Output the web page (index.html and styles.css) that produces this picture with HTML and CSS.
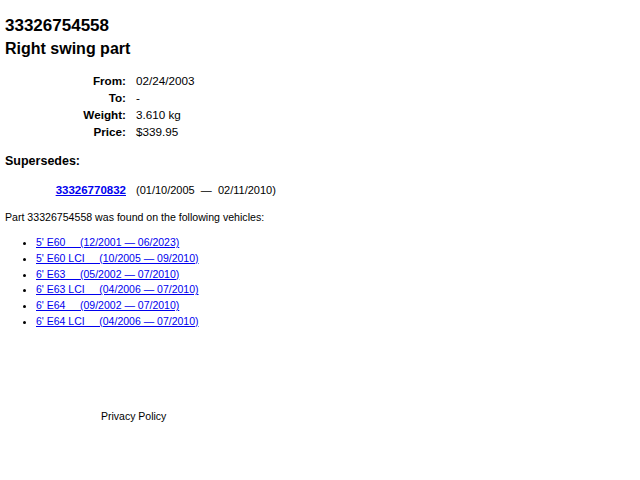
FILE: index.html
```html
<!DOCTYPE html>
<html lang="en">
<head>
  <meta charset="UTF-8">
  <title>33326754558 Right swing part</title>
  <link rel="stylesheet" href="styles.css">
</head>
<body>
  <h1 class="part-no">33326754558</h1>
  <h2 class="part-name">Right swing part</h2>

  <div class="details">
    <span class="label">From:</span><span class="value">02/24/2003</span>
    <span class="label">To:</span><span class="value">-</span>
    <span class="label">Weight:</span><span class="value">3.610 kg</span>
    <span class="label">Price:</span><span class="value">$339.95</span>
  </div>

  <h3 class="section">Supersedes:</h3>
  <div class="details supersedes">
    <span class="label"><a href="#">33326770832</a></span><span class="value">(01/10/2005&nbsp; — &nbsp;02/11/2010)</span>
  </div>

  <p class="found">Part 33326754558 was found on the following vehicles:</p>
  <ul class="vehicles">
    <li><a href="#">5' E60&nbsp;&nbsp;&nbsp;&nbsp;&nbsp;(12/2001 — 06/2023)</a></li>
    <li><a href="#">5' E60 LCI&nbsp;&nbsp;&nbsp;&nbsp;&nbsp;(10/2005 — 09/2010)</a></li>
    <li><a href="#">6' E63&nbsp;&nbsp;&nbsp;&nbsp;&nbsp;(05/2002 — 07/2010)</a></li>
    <li><a href="#">6' E63 LCI&nbsp;&nbsp;&nbsp;&nbsp;&nbsp;(04/2006 — 07/2010)</a></li>
    <li><a href="#">6' E64&nbsp;&nbsp;&nbsp;&nbsp;&nbsp;(09/2002 — 07/2010)</a></li>
    <li><a href="#">6' E64 LCI&nbsp;&nbsp;&nbsp;&nbsp;&nbsp;(04/2006 — 07/2010)</a></li>
  </ul>

  <div class="footer">Privacy Policy</div>
</body>
</html>
```

FILE: styles.css
```css
body {
  font-family: 'Liberation Sans', Arial, sans-serif;
  color: #000;
  background: #fff;
  margin: 0;
  padding: 14px 5px;
}

.part-no,
.part-name {
  font-weight: bold;
  margin: 0;
  line-height: 23px;
}

.part-no {
  font-size: 17px;
}

.part-name {
  font-size: 16px;
}

.details {
  display: grid;
  grid-template-columns: 121px auto;
  column-gap: 10px;
  font-size: 11.7px;
  line-height: 17px;
  margin-top: 12px;
}

.label {
  text-align: right;
  font-weight: bold;
}

.section {
  font-size: 12.5px;
  line-height: 17px;
  font-weight: bold;
  margin: 13px 0 0;
}

.supersedes {
  margin-top: 12px;
}

.supersedes .label {
  font-size: 11.5px;
}

.supersedes .value {
  font-size: 11px;
}

a {
  color: #0000ee;
}

.found {
  font-size: 10.6px;
  line-height: 13px;
  margin: 12px 0 0;
}

.vehicles {
  font-size: 10.5px;
  line-height: 15.8px;
  margin: 11px 0 0;
  padding-left: 31px;
}

.footer {
  font-size: 10.5px;
  line-height: 13px;
  margin: 80px 0 0 96px;
}
```
